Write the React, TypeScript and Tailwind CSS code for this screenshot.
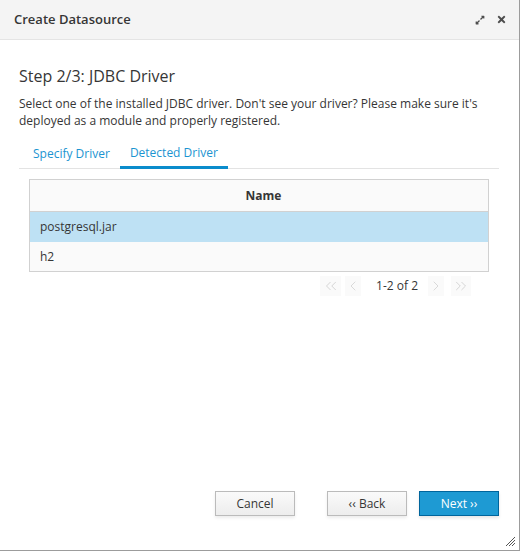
import React, { useState } from "react";
import { FaExpandAlt, FaTimes } from "react-icons/fa";
import { ChevronsLeft, ChevronLeft, ChevronRight, ChevronsRight } from "lucide-react";

const drivers = ["postgresql.jar", "h2"];

export default function App() {
  const [tab, setTab] = useState<"specify" | "detected">("detected");
  const [selected, setSelected] = useState(0);

  return (
    <div
      className="relative flex h-[551px] w-[520px] flex-col border-r border-b border-[#9c9c9c] bg-white text-[#363636]"
      style={{ fontFamily: '"Open Sans", "Liberation Sans", sans-serif' }}
    >
      {/* header */}
      <div className="flex h-[40px] shrink-0 items-center justify-between border-b border-[#e4e4e4] bg-[#f4f4f4] pl-[14px] pr-[12px]">
        <span className="text-[13px] font-semibold text-[#363636]">Create Datasource</span>
        <div className="flex items-center gap-[11px] text-[#4d4d4d]">
          <FaExpandAlt className="h-[10px] w-[10px]" />
          <FaTimes className="h-[11px] w-[11px]" />
        </div>
      </div>

      {/* body */}
      <div className="flex flex-1 flex-col pl-[19px] pr-[20px] pt-[25px]">
        <h2 className="text-[16px] leading-[22px] text-[#363636]">Step 2/3: JDBC Driver</h2>
        <p className="mt-[8px] text-[12px] leading-[17px] text-[#363636]">
          Select one of the installed JDBC driver. Don't see your driver? Please make sure it's deployed as a module and
          properly registered.
        </p>

        <div className="mt-[11px] flex border-b border-[#e3e3e3] pl-[1px]">
          <button
            onClick={() => setTab("specify")}
            className={`-mb-[1px] border-b-[3px] px-[13px] pb-[4px] pt-[5px] text-[12px] leading-[17px] text-[#1b94d1] ${
              tab === "specify" ? "border-[#0a8ccc]" : "border-transparent"
            }`}
          >
            Specify Driver
          </button>
          <button
            onClick={() => setTab("detected")}
            className={`-mb-[1px] ml-[-3px] border-b-[3px] px-[10px] pb-[5px] pt-[4px] text-[12px] leading-[17px] text-[#1b94d1] ${
              tab === "detected" ? "border-[#0a8ccc]" : "border-transparent"
            }`}
          >
            Detected Driver
          </button>
        </div>

        <div className="mx-[10px] mt-[10px] border border-[#d1d1d1]">
          <div className="flex h-[32px] items-center justify-center border-b border-[#d1d1d1] bg-[#fafafa] pl-[9px] text-[12px] font-bold text-[#363636]">
            Name
          </div>
          {drivers.map((d, i) => (
            <div
              key={d}
              onClick={() => setSelected(i)}
              className={`flex cursor-pointer items-center px-[10px] text-[12px] text-[#363636] ${
                selected === i ? "bg-[#bee1f4]" : "bg-[#fafafa]"
              } ${i === 1 ? "h-[29px]" : "h-[30px]"}`}
            >
              {d}
            </div>
          ))}
        </div>

        <div className="mr-[28px] mt-[4px] flex items-center justify-end text-[#c8c8c8]">
          <span className="flex h-[20px] w-[21px] items-center justify-center bg-[#fafafa]">
            <ChevronsLeft className="h-[18px] w-[18px]" strokeWidth={1} />
          </span>
          <span className="ml-[4px] flex h-[20px] w-[16px] items-center justify-center bg-[#fafafa]">
            <ChevronLeft className="h-[18px] w-[18px]" strokeWidth={1} />
          </span>
          <span className="ml-[15px] text-[12px] text-[#363636]">1-2 of 2</span>
          <span className="ml-[10px] flex h-[20px] w-[16px] items-center justify-center bg-[#fafafa]">
            <ChevronRight className="h-[18px] w-[18px]" strokeWidth={1} />
          </span>
          <span className="ml-[7px] flex h-[20px] w-[20px] items-center justify-center bg-[#fafafa]">
            <ChevronsRight className="h-[18px] w-[18px]" strokeWidth={1} />
          </span>
        </div>

        <div className="mb-[34px] mt-auto flex justify-end">
          <button className="h-[25px] w-[80px] border border-[#bbbbbb] bg-gradient-to-b from-[#fafafa] to-[#ededed] text-[12px] text-[#363636] shadow-[0_2px_3px_rgba(0,0,0,0.08)]">
            Cancel
          </button>
          <button className="ml-[32px] h-[25px] w-[80px] border border-[#bbbbbb] bg-gradient-to-b from-[#fafafa] to-[#ededed] text-[12px] text-[#363636] shadow-[0_2px_3px_rgba(0,0,0,0.08)]">
            ‹‹ Back
          </button>
          <button className="ml-[12px] h-[25px] w-[80px] border border-[#00659c] bg-[#1e9ad3] text-[12px] text-white shadow-[0_2px_3px_rgba(0,0,0,0.1)]">
            Next ››
          </button>
        </div>
      </div>

      {/* resize grip */}
      <svg className="absolute bottom-[3px] right-[3px]" width="11" height="11" viewBox="0 0 11 11">
        <g stroke="#555" strokeWidth="1">
          <line x1="1" y1="10" x2="10" y2="1" />
          <line x1="4" y1="10" x2="10" y2="4" />
          <line x1="7" y1="10" x2="10" y2="7" />
        </g>
      </svg>
    </div>
  );
}
